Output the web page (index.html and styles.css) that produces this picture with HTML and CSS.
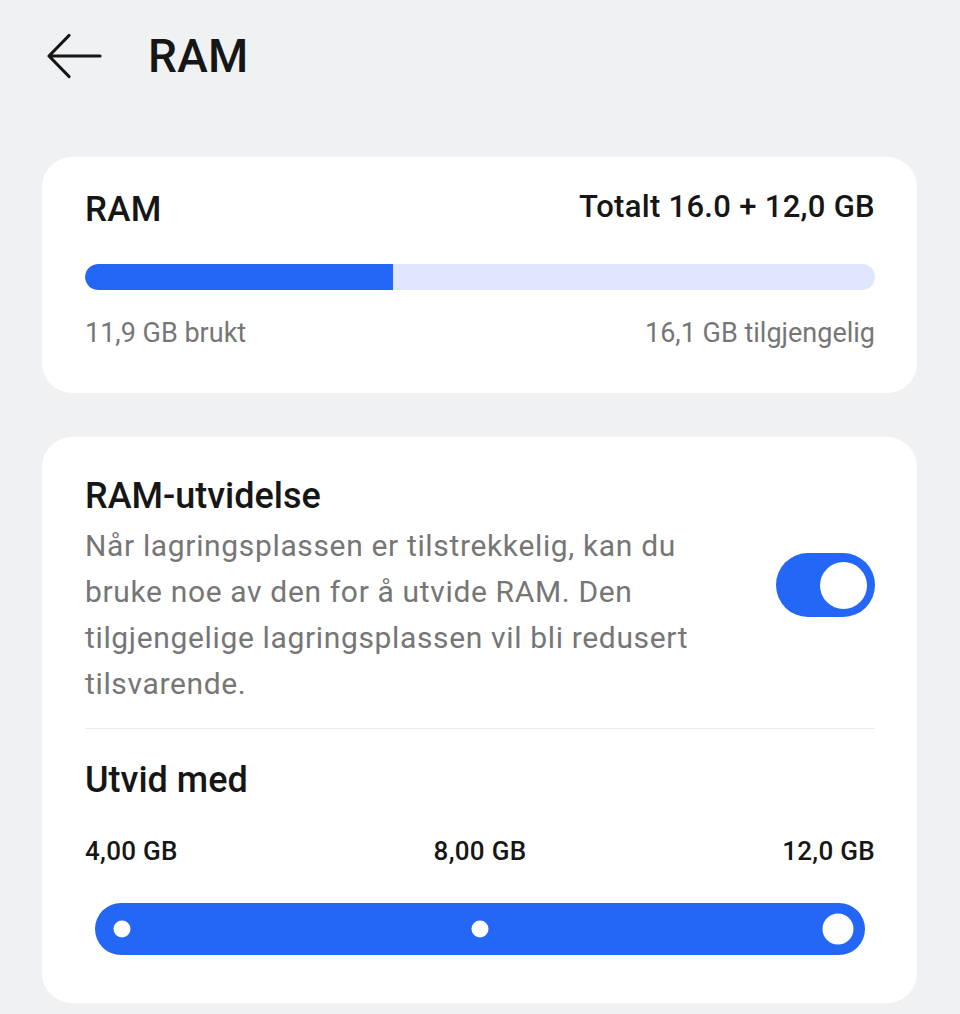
FILE: index.html
```html
<!DOCTYPE html>
<html lang="no">
<head>
<meta charset="utf-8">
<title>RAM</title>
<link rel="stylesheet" href="styles.css">
</head>
<body>
<div class="page">
  <header class="topbar">
    <svg class="back" width="56" height="46" viewBox="0 0 56 46" aria-hidden="true">
      <path d="M54 23H3 M23 2.5 L3 23 L23 43.5" fill="none" stroke="#161616" stroke-width="3.2" stroke-linecap="round" stroke-linejoin="round"/>
    </svg>
    <h1 class="title">RAM</h1>
  </header>
  <main class="content">
    <section class="card usage">
      <div class="usage-head">
        <span class="usage-name">RAM</span>
        <span class="usage-total">Totalt 16.0 + 12,0 GB</span>
      </div>
      <div class="bar"><div class="bar-fill" style="width:39%"></div></div>
      <div class="usage-foot">
        <span>11,9 GB brukt</span>
        <span>16,1 GB tilgjengelig</span>
      </div>
    </section>
    <section class="card expand">
      <div class="expand-top">
        <div class="expand-text">
          <h2 class="expand-title">RAM-utvidelse</h2>
          <p class="expand-desc">Når lagringsplassen er tilstrekkelig, kan du bruke noe av den for å utvide RAM. Den tilgjengelige lagringsplassen vil bli redusert tilsvarende.</p>
        </div>
        <div class="toggle"><div class="toggle-knob"></div></div>
      </div>
      <div class="expand-bottom">
        <h2 class="expand-title">Utvid med</h2>
        <div class="scale">
          <span class="scale-l">4,00 GB</span>
          <span class="scale-c">8,00 GB</span>
          <span class="scale-r">12,0 GB</span>
        </div>
        <div class="slider">
          <div class="slider-track">
            <span class="dot" style="left:0%"></span>
            <span class="dot" style="left:50%"></span>
            <span class="dot thumb" style="left:100%"></span>
          </div>
        </div>
      </div>
    </section>
  </main>
</div>
</body>
</html>
```

FILE: styles.css
```css
* { box-sizing: border-box; }
html, body { margin: 0; padding: 0; }
body {
  background: #f0f1f3;
  font-family: Roboto, "Noto Sans", "Liberation Sans", sans-serif;
  color: #161616;
  width: 960px;
  height: 1014px;
  overflow: hidden;
}
.topbar {
  height: 112px;
  display: flex;
  align-items: center;
  padding-left: 46px;
  gap: 46px;
}
.back { display: block; flex: none; }
.title {
  margin: 0;
  font-size: 46px;
  line-height: 56px;
  font-weight: 500;
  letter-spacing: 0.3px;
}
.content {
  padding: 45px 43px 0 42px;
  display: flex;
  flex-direction: column;
  gap: 44px;
}
.card {
  background: #ffffff;
  border-radius: 30px;
  padding-left: 43px;
  padding-right: 42px;
}
.usage { padding-top: 32px; padding-bottom: 42px; }
.usage-head {
  display: flex;
  justify-content: space-between;
  align-items: flex-start;
}
.usage-name { font-size: 35px; line-height: 42px; font-weight: 500; letter-spacing: 0.3px; }
.usage-total { font-size: 31px; line-height: 36px; font-weight: 500; letter-spacing: 0.3px; }
.bar {
  margin-top: 33px;
  height: 26px;
  border-radius: 13px;
  background: #dfe6fb;
  overflow: hidden;
}
.bar-fill {
  height: 100%;
  background: #2466f5;
  border-radius: 13px 0 0 13px;
}
.usage-foot {
  margin-top: 25px;
  display: flex;
  justify-content: space-between;
  font-size: 27px;
  line-height: 36px;
  color: #767676;
}
.expand { padding-top: 38px; padding-bottom: 48px; }
.expand-top {
  display: flex;
  justify-content: space-between;
  align-items: center;
  padding-bottom: 21px;
  border-bottom: 1px solid #ebebeb;
}
.expand-text { width: 640px; }
.expand-title {
  margin: 0;
  font-size: 36px;
  line-height: 42px;
  font-weight: 500;
}
.expand-desc {
  margin: 6px 0 0;
  font-size: 30px;
  line-height: 46px;
  letter-spacing: 0.65px;
  color: #767676;
}
.toggle {
  flex: none;
  width: 99px;
  height: 64px;
  border-radius: 32px;
  background: #2466f5;
  display: flex;
  align-items: center;
  justify-content: flex-end;
  padding-right: 8.5px;
  margin-bottom: 12px;
}
.toggle-knob {
  width: 47px;
  height: 47px;
  border-radius: 50%;
  background: #ffffff;
}
.expand-bottom { padding-top: 30px; }
.scale {
  margin-top: 33px;
  display: grid;
  grid-template-columns: 1fr auto 1fr;
  font-size: 26px;
  line-height: 34px;
  font-weight: 500;
  letter-spacing: 0.3px;
}
.scale-l { justify-self: start; }
.scale-c { justify-self: center; }
.scale-r { justify-self: end; }
.slider {
  margin: 35px 10px 0;
  height: 52px;
  border-radius: 26px;
  background: #2466f5;
  padding: 0 27px;
}
.slider-track {
  position: relative;
  height: 100%;
}
.dot {
  position: absolute;
  top: 50%;
  width: 17px;
  height: 17px;
  border-radius: 50%;
  background: #ffffff;
  transform: translate(-50%, -50%);
}
.dot.thumb { width: 31px; height: 31px; }
```
